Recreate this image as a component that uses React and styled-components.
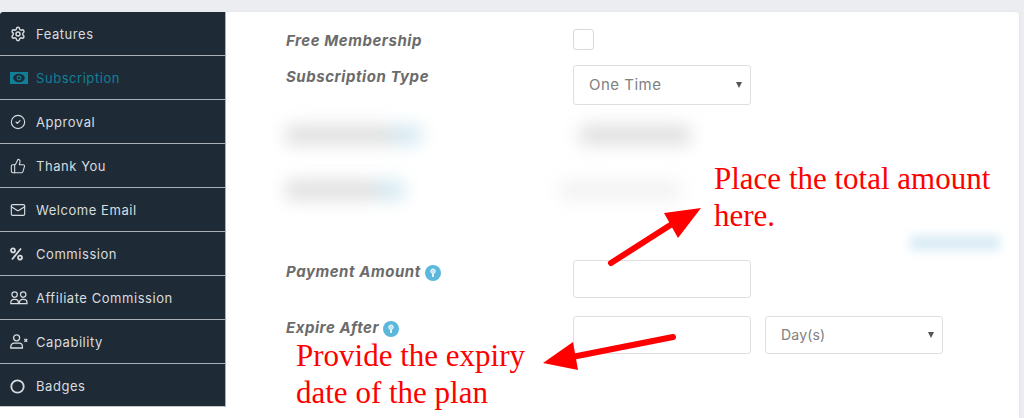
import React from 'react';
import styled, { createGlobalStyle } from 'styled-components';
import { Settings, CircleCheck, ThumbsUp, Mail } from 'lucide-react';

const GlobalStyle = createGlobalStyle`
  html, body {
    margin: 0;
    height: 100%;
    background: #ebedf1;
    overflow: hidden;
  }
`;

const Page = styled.div`
  position: relative;
  width: 1024px;
  height: 418px;
  padding: 12px 5px 0 0;
  box-sizing: border-box;
  font-family: Inter, 'Liberation Sans', sans-serif;
`;

const Layout = styled.div`
  display: flex;
  height: 100%;
  background: #fff;
  border-top-right-radius: 4px;
  box-shadow: 1px 0 2px #e3e5e9;
`;

const Sidebar = styled.nav`
  width: 226px;
  height: 395px;
  flex: none;
  box-sizing: border-box;
  background: #1e2b37;
  border-right: 1px solid #aab0b5;
  border-bottom: 1px solid #c4c8cb;
  border-top-left-radius: 3px;
`;

const NavRow = styled.div`
  display: flex;
  align-items: center;
  height: 44px;
  box-sizing: border-box;
  padding-left: 10px;
  border-bottom: 1px solid #aab0b5;
  color: ${(p) => (p.$active ? '#117f97' : '#d9dcdf')};
  font-size: 13px;
  letter-spacing: 0.55px;
  &:last-child {
    border-bottom: none;
  }
`;

const NavIcon = styled.span`
  display: flex;
  width: 26px;
  flex: none;
`;

const Main = styled.main`
  flex: 1;
  padding: 17px 0 0 60px;
`;

const Row = styled.div`
  display: flex;
  align-items: flex-start;
  height: ${(p) => p.$height}px;
`;

const Label = styled.label`
  display: flex;
  align-items: center;
  gap: 4px;
  width: 287px;
  flex: none;
  padding-top: 1px;
  font-size: 15px;
  font-weight: 700;
  font-style: italic;
  letter-spacing: 0.55px;
  color: #6b6b6b;
  line-height: 22px;
`;

const Checkbox = styled.span`
  display: block;
  width: 19px;
  height: 19px;
  border: 1px solid #d9d9d9;
  border-radius: 3px;
`;

const Field = styled.div`
  display: flex;
  align-items: center;
  justify-content: space-between;
  width: 178px;
  height: ${(p) => p.$height || 38}px;
  box-sizing: border-box;
  padding: 0 8px 2px 15px;
  margin-right: 14px;
  border: 1px solid #dfdfdf;
  border-radius: 3px;
  color: #808080;
  font-size: ${(p) => p.$size || 15}px;
  letter-spacing: ${(p) => p.$spacing || 0.5}px;
`;

const Caret = styled.span`
  width: 0;
  height: 0;
  margin-top: 2px;
  border-left: 3px solid transparent;
  border-right: 3px solid transparent;
  border-top: 6px solid #555;
`;

const Blurred = styled.div`
  display: flex;
  align-items: center;
  height: ${(p) => p.$height}px;
  filter: blur(9px);
`;

const Smudge = styled.span`
  display: block;
  flex: none;
  width: ${(p) => p.$width}px;
  height: 18px;
  margin-right: ${(p) => p.$gap || 0}px;
  background: ${(p) => p.$color || '#dcdcdc'};
`;

const ButtonSmudge = styled.div`
  width: 90px;
  height: 16px;
  margin: 5px 0 9px 624px;
  background: #dcedf6;
  filter: blur(5px);
`;

const HelpDot = styled.svg`
  flex: none;
  width: 16px;
  height: 16px;
  margin-top: 2px;
`;

const Glyph = styled.svg`
  display: block;
  fill: none;
  stroke: currentColor;
`;

const Note = styled.div`
  position: absolute;
  left: ${(p) => p.$left}px;
  top: ${(p) => p.$top}px;
  color: #ff0000;
  font-family: 'Liberation Serif', serif;
  font-size: 31px;
  line-height: 37px;
  white-space: nowrap;
`;

const ArrowLayer = styled.svg`
  position: absolute;
  left: 0;
  top: 0;
  pointer-events: none;
`;

function NoteIcon() {
  return (
    <Glyph width="18" height="12" viewBox="0 0 18 12" strokeWidth="1.5">
      <rect x="0.75" y="0.75" width="16.5" height="10.5" fill="currentColor" />
      <ellipse cx="9" cy="6" rx="5.8" ry="4.2" fill="#1e2b37" stroke="none" />
      <circle cx="9" cy="6" r="1.9" strokeWidth="1.1" />
    </Glyph>
  );
}

function PercentIcon() {
  return (
    <Glyph width="13" height="14" viewBox="0 0 13 14" strokeWidth="1.8">
      <circle cx="3" cy="3.4" r="2" />
      <circle cx="10" cy="10.6" r="2" />
      <path d="M11 1.5 2 12.5" />
    </Glyph>
  );
}

function Figure({ x = 0 }) {
  return (
    <g transform={`translate(${x} 0)`}>
      <circle cx="4.6" cy="3.6" r="2.7" />
      <path d="M.8 12.6v-1.2a3 3 0 0 1 3-3h1.6a3 3 0 0 1 3 3v1.2z" />
    </g>
  );
}

function UsersIcon() {
  return (
    <Glyph width="18" height="14" viewBox="0 0 18 14" strokeWidth="1.2">
      <Figure />
      <Figure x={8.6} />
    </Glyph>
  );
}

function CapabilityIcon() {
  return (
    <Glyph width="18" height="15" viewBox="0 0 18 15" strokeWidth="1.3">
      <circle cx="6.6" cy="3.8" r="3" />
      <path d="M.8 14v-1.5a3.4 3.4 0 0 1 3.4-3.4h4.8a3.4 3.4 0 0 1 3.4 3.4V14z" />
      <path d="M14.4 5l2.8 2.8M17.2 5l-2.8 2.8" />
    </Glyph>
  );
}

function RingIcon() {
  return (
    <Glyph width="15" height="15" viewBox="0 0 15 15" strokeWidth="1.8">
      <circle cx="7.5" cy="7.5" r="6.2" />
    </Glyph>
  );
}

const navItems = [
  { label: 'Features', icon: <Settings size={16} strokeWidth={2.2} /> },
  { label: 'Subscription', icon: <NoteIcon />, active: true },
  { label: 'Approval', icon: <CircleCheck size={16} strokeWidth={1.7} /> },
  { label: 'Thank You', icon: <ThumbsUp size={16} strokeWidth={1.6} /> },
  { label: 'Welcome Email', icon: <Mail size={16} strokeWidth={1.7} /> },
  { label: 'Commission', icon: <PercentIcon /> },
  { label: 'Affiliate Commission', icon: <UsersIcon /> },
  { label: 'Capability', icon: <CapabilityIcon /> },
  { label: 'Badges', icon: <RingIcon /> },
];

function Help() {
  return (
    <HelpDot viewBox="0 0 16 16">
      <circle cx="8" cy="8" r="8" fill="#5bb8dc" />
      <circle cx="8" cy="6.2" r="2.3" fill="#bfe4f2" stroke="#e8f6fb" strokeWidth="1" />
      <path d="M8 8.5v3.5" stroke="#e8f6fb" strokeWidth="2" />
    </HelpDot>
  );
}

export default function App() {
  return (
    <Page>
      <GlobalStyle />
      <Layout>
        <Sidebar>
          {navItems.map(({ label, icon, active }) => (
            <NavRow key={label} $active={active}>
              <NavIcon>{icon}</NavIcon>
              {label}
            </NavRow>
          ))}
        </Sidebar>
        <Main>
          <Row $height={36}>
            <Label>Free Membership</Label>
            <Checkbox />
          </Row>
          <Row $height={55}>
            <Label>Subscription Type</Label>
            <Field $height={40}>
              One Time
              <Caret />
            </Field>
          </Row>
          <Blurred $height={30}>
            <Smudge $width={105} />
            <Smudge $width={30} $gap={159} $color="#cfe6ef" />
            <Smudge $width={110} />
          </Blurred>
          <Blurred $height={80}>
            <Smudge $width={90} />
            <Smudge $width={28} $gap={156} $color="#cfe6ef" />
            <Smudge $width={120} $color="#f1f1f1" />
          </Blurred>
          <ButtonSmudge />
          <Row $height={56}>
            <Label>
              Payment Amount <Help />
            </Label>
            <Field />
          </Row>
          <Row $height={40}>
            <Label>
              Expire After <Help />
            </Label>
            <Field />
            <Field $size={14} $spacing={0.2}>
              Day(s)
              <Caret />
            </Field>
          </Row>
        </Main>
      </Layout>
      <Note $left={714} $top={160}>
        Place the total amount
        <br />
        here.
      </Note>
      <Note $left={296} $top={337}>
        Provide the expiry
        <br />
        date of the plan
      </Note>
      <ArrowLayer width="1024" height="418" viewBox="0 0 1024 418">
        <path d="M611 263 L672 224" stroke="#ff0000" strokeWidth="6" strokeLinecap="round" />
        <polygon points="701,208 664,213 678,238" fill="#ff0000" />
        <path d="M673 337 L572 357" stroke="#ff0000" strokeWidth="6" strokeLinecap="round" />
        <polygon points="543,363 573,342 578,370" fill="#ff0000" />
      </ArrowLayer>
    </Page>
  );
}
